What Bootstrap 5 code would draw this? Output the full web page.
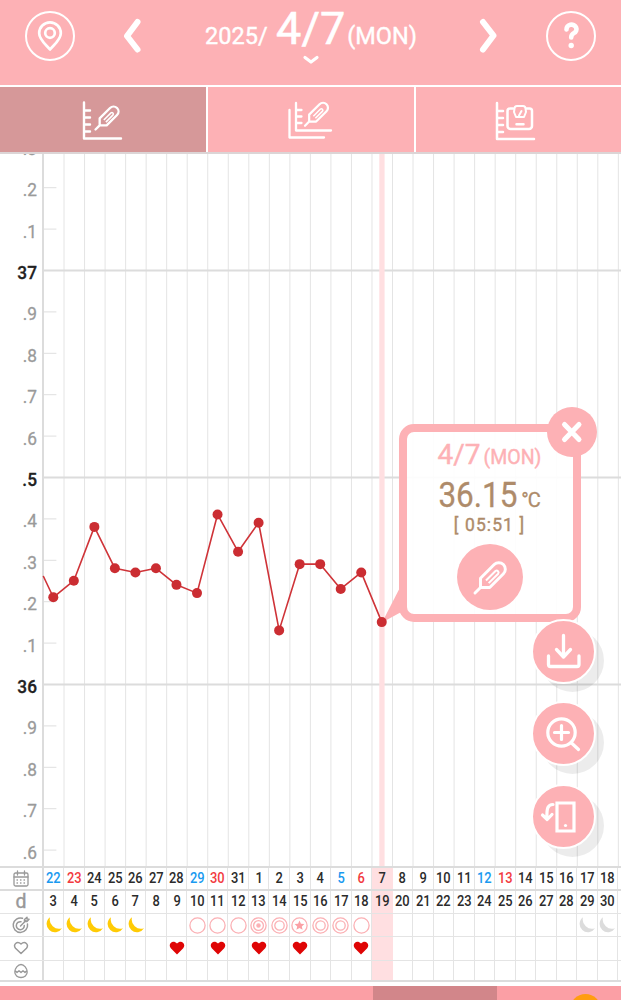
<!DOCTYPE html>
<html lang="ja">
<head>
<meta charset="utf-8">
<meta name="viewport" content="width=device-width, initial-scale=1">
<title>2025/4/7</title>
<link href="https://cdn.jsdelivr.net/npm/bootstrap@5.3.0/dist/css/bootstrap.min.css" rel="stylesheet">
<style>
:root{--pink:#fdb1b5;--grid:#dfdfdf;--colw:20.53px}
body{font-family:Roboto,"Liberation Sans",sans-serif;background:#fff;height:1000px;overflow:hidden;line-height:1}
svg{display:block;fill:none;stroke-linecap:round;stroke-linejoin:round}
.topbar{height:85px;background:var(--pink);padding-left:24.5px}
.topbar>*{flex:none}
.day-title{width:212px;height:64px;margin-left:62px;font-weight:400;font-size:23.5px;white-space:nowrap;-webkit-text-stroke:.4px #fff}
.day-title .big{font-size:45px;margin:0 2px 0 8.5px;-webkit-text-stroke:.6px #fff}
.day-title .words{height:50px;line-height:50px;padding-top:4px;align-items:baseline}
.tabs3{height:68.5px;border-top:2px solid #fff;border-bottom:2px solid #dcd5d6}
.tabs3 a{background:var(--pink);width:206px;flex:none}
.tabs3 a+a{border-left:2px solid #fff;width:208px}
.tabs3 a.active{background:#d69899}
.plot{height:712.5px}
.plot text{font-size:19px;text-anchor:end;fill:#9a9a9a;stroke:#9a9a9a;stroke-width:.3px}
.plot text.major{fill:#222;stroke:#222;font-weight:500}
.bubble{left:398.5px;top:270px;width:182px;height:198px;border:8px solid var(--pink);border-radius:15px;background:rgba(255,255,255,.9);color:var(--pink)}
.bubble>*{flex:none}
.bubble .d1{font-size:28px;line-height:32px;height:34px;margin-top:7px;font-weight:400;-webkit-text-stroke:.4px var(--pink)}
.bubble .d1 small{font-size:19.5px;margin-left:3px}
.bubble .temp{color:#ae8b6a;font-size:35px;line-height:40px;height:40px;margin-top:3px;-webkit-text-stroke:.3px #ae8b6a}
.bubble .temp b{font-weight:400;display:inline-block;transform:scaleX(.9);margin:0 -5px}
.bubble .temp small{font-size:20px;margin-left:4px;letter-spacing:-1px}
.bubble .hour{color:#ae8b6a;font-size:17.5px;line-height:18px;letter-spacing:1.1px;font-weight:400;-webkit-text-stroke:.4px #ae8b6a}
.disc{border-radius:50%;background:var(--pink)}
.shut{width:50px;height:50px;left:547.3px;top:253px}
.fab{width:65px;height:65px;border:2px solid #fff;left:530.5px;box-shadow:9px 9px 0 -1px rgba(0,0,0,.075)}
.sheet{border-top:2px solid #dcdcdc;border-bottom:2px solid #dcdcdc;height:116px;overflow:hidden}
.line-row{display:grid;grid-template-columns:43.8px repeat(29,var(--colw));height:23.2px;border-bottom:1px solid #e4e4e4}
.line-row:first-child{height:23px;border-bottom:2px solid #dcdcdc}
.line-row:last-child{border-bottom:0}
.line-row>div{display:flex;align-items:center;justify-content:center;border-right:1px solid #e4e4e4;font-weight:500;font-size:14.5px;color:#2b2b2b}
.line-row>div:first-child{border-right:2px solid #dcdcdc;color:#999}
.line-row>.today{background:#ffdfe1;border-color:#ffdfe1}
.line-row>.sat{color:#1a9af0}.line-row>.sun{color:#f23b3f}
.line-row u{text-decoration:none;transform:scaleX(.89)}
.line-row:first-child u{padding-top:2px}
.navstrip{height:14px;margin-top:4px;background:#fb9fa5;overflow:hidden}
.navstrip i{width:124.5px;height:14px;margin-left:372.5px;background:#d2868a}
.navstrip b{width:31px;height:31px;border-radius:50%;background:#ff9d10;margin:8px 0 0 72.5px;flex:none}
</style>
<script src="https://cdn.jsdelivr.net/npm/bootstrap@5.3.0/dist/js/bootstrap.bundle.min.js"></script>
</head>
<body>
<svg width="0" height="0" class="position-absolute">
  <defs>
    <g id="thermo"><path d="M0 25 4.300 20.700H11.500L22.200 10a5 5 0 0 0-7.200-7.200L4.300 13.500V20.700"/><path d="M8.600 15.200 16 7.800a1.500 1.500 0 0 1 2.100 2.100L10.700 17.300" stroke-width="1.600" stroke-linecap="butt"/></g>
    <g id="ruler"><path d="M0 0V36H37M0 8H6M0 15H6M0 22H6M0 29H6"/></g>
  </defs>
</svg>
<header class="topbar d-flex">
  <svg width="50" height="50" style="margin-top:11px" stroke="#fff"><circle cx="25" cy="25" r="24" stroke-width="2"/><path d="M25 38.500c-3-4-10.800-9.500-10.800-16.300a10.800 10.800 0 0 1 21.600 0C35.800 29 28 34.500 25 38.500z" stroke-width="2.700"/><circle cx="25" cy="22" r="4.800" stroke-width="2.700"/></svg>
  <svg width="20" height="36" style="margin:18px 0 0 48.500px" stroke="#fff" stroke-width="6"><path d="M14.500 4 4 18 14.500 31.500"/></svg>
  <div class="day-title text-white d-flex flex-column align-items-center">
    <div class="words d-flex"><span>2025/</span><span class="big">4/7</span><span>(MON)</span></div>
    <svg width="18" height="10" style="margin-top:5px" stroke="#fff" stroke-width="3.200"><path d="M3 2.500 9 7 15 2.500"/></svg>
  </div>
  <svg width="20" height="36" style="margin:18px 0 0 61px" stroke="#fff" stroke-width="6"><path d="M5 4 15.500 17.500 5 31.500"/></svg>
  <svg width="50" height="50" style="margin:11px 0 0 48px" stroke="#fff"><circle cx="25" cy="25" r="24" stroke-width="2"/><path d="M20.500 18.500a5 4.500 0 1 1 7.500 3.500c-2 1-2.800 1.800-2.800 4.500" stroke-width="4.600"/><circle cx="25.200" cy="34.500" r="2.700" fill="#fff" stroke="none"/></svg>
</header>
<nav class="tabs3 d-flex">
  <a class="active"><svg width="206" height="64" stroke="#fff" stroke-width="2.400"><use href="#ruler" x="84" y="15.500"/><use href="#thermo" transform="translate(95.500 18.300) scale(.97)"/></svg></a>
  <a><svg width="206" height="64" stroke="#fff" stroke-width="2.300"><path d="M81.500 23V50.500H116"/><path d="M88 16V43.500H123M88 23H93.500M88 29.500H93.500M88 36H93.500"/><use href="#thermo" transform="translate(97 14.500) scale(.97)"/></svg></a>
  <a><svg width="205" height="64" stroke="#fff" stroke-width="2.500"><use href="#ruler" x="81" y="16"/><path d="M97 21.500H94a2.500 2.500 0 0 0-2.500 2.500V39a3 3 0 0 0 3 3H113a3 3 0 0 0 3-3V24a2.500 2.500 0 0 0-2.500-2.500H110.500M100.500 37.300H107.500"/><path d="M98.500 21.500q0-2.500 2.500-2.500h6q2.500 0 2.500 2.500l.5 3.500-2 5H100l-2-5zM103 28.500 105.500 24" stroke-width="2"/></svg></a>
</nav>
<main class="position-relative">
  <svg class="plot" id="plot" width="621" height="713" viewBox="0 153.500 621 712.500" preserveAspectRatio="none"></svg>
  <section class="bubble position-absolute d-flex flex-column align-items-center">
    <div class="d1">4/7<small>(MON)</small></div>
    <div class="temp"><b>36.15</b><small>°C</small></div>
    <div class="hour">[ 05:51 ]</div>
    <svg width="66" height="66" style="margin-top:10.500px" stroke="#fff"><circle cx="33" cy="33" r="33" fill="#fdb1b5" stroke="none"/><use href="#thermo" transform="translate(18 17) scale(1.280)" stroke-width="2.300"/></svg>
  </section>
  <button class="disc shut position-absolute border-0 p-0"><svg width="50" height="50" stroke="#fff" stroke-width="5"><path d="M17.500 17.500 32 32.500M32 17.500 17.500 32.500"/></svg></button>
  <button class="disc fab position-absolute p-0" style="top:465px"><svg width="61" height="61" stroke="#fff" stroke-width="3.300"><path d="M30.500 14.500V35.500M23.500 28.500 30.500 36 37.500 28.500M15.500 35V43.500q0 2 2 2H44q2 0 2-2V35"/></svg></button>
  <button class="disc fab position-absolute p-0" style="top:547.500px"><svg width="61" height="61" stroke="#fff" stroke-width="3.200"><circle cx="28.500" cy="29.500" r="13.700"/><path d="M28.500 22.500V36.500M21.500 29.500H35.500M38.500 40 45.500 46.500"/></svg></button>
  <button class="disc fab position-absolute p-0" style="top:630.500px"><svg width="61" height="61" stroke="#fff" stroke-width="3.200"><path d="M24 17H41V45H24z" stroke-linejoin="miter"/><path d="M20 18.500C15 18.500 13.500 22 14 32M9.500 29 14.200 33.500 19 28.500"/><circle cx="32.500" cy="39.500" r="1.600" fill="#fff" stroke="none"/></svg></button>
</main>
<section class="sheet" id="sheet"></section>
<footer class="navstrip d-flex"><i></i><b></b></footer>
<script>
const STEP = 20.53, X0 = 43.5;
const ty = t => 684 - (t - 36) * 414;
const temps = [.21,.25,.38,.28,.27,.28,.24,.22,.41,.32,.39,.13,.29,.29,.23,.27,.15];
let g = '';
for (let i = 1; i < 29; i++) g += `<path d="M${X0 + i*STEP} 153V866" stroke="#e4e4e4"/>`;
for (let k = 356; k <= 373; k++) {
  const y = ty(k / 10), major = k % 5 === 0;
  g += major ? `<path d="M43 ${y}H621" stroke="#dcdcdc" stroke-width="2"/>` : `<path d="M43 ${y}H56" stroke="#dfdfdf"/>`;
  g += `<text class="${major ? 'major' : ''}" transform="translate(37 ${y + 8.5}) scale(.91 1)">${k % 10 === 0 ? k / 10 : '.' + k % 10}</text>`;
}
g += '<rect x="379.300" y="153" width="5.300" height="713" fill="#ffdfe1"/><path d="M43 153V866" stroke="#dcdcdc" stroke-width="2"/>';
g += '<path d="M382 622 399.500 588 404 610z" fill="#fdb1b5"/>';
const pts = temps.map((t, i) => [53.3 + i*STEP, ty(36 + t) - .3]);
g += `<polyline points="43.500,576 ${pts.join(' ')}" stroke="#cf3338" stroke-width="1.600"/>`;
pts.forEach(p => g += `<circle cx="${p[0]}" cy="${p[1]}" r="5" fill="#cb2d32"/>`);
document.getElementById('plot').innerHTML = g;

const moon = c => `<svg width="18" height="17"><path d="M5 .3A8.300 8.300 0 1 0 17 11.300 9.300 9.300 0 0 1 5 .3z" fill="${c}"/></svg>`;
const ring = inner => `<svg width="17" height="17" stroke="#fbb0b4" stroke-width="1.300"><circle cx="8.500" cy="8.500" r="7.600"/>${inner}</svg>`;
const dbl = ring('<circle cx="8.500" cy="8.500" r="4.700"/>');
const tri = ring('<circle cx="8.500" cy="8.500" r="4.900"/><circle cx="8.500" cy="8.500" r="1.600" fill="#fbb0b4"/>');
const star = ring('<path d="M8.500 3.600 9.900 6.800 13.400 7.100 10.800 9.400 11.600 12.800 8.500 11 5.400 12.800 6.200 9.400 3.600 7.100 7.100 6.800z" fill="#fba0a5" stroke="none"/>');
const heart = '<svg width="16" height="14"><path d="M8 13.500 1.800 7.300C-1.500 3.500 3.500-2 8 2.500 12.500-2 17.500 3.500 14.200 7.300z" fill="#df0505"/></svg>';
const gold = '#ffcb05', pale = '#dcdcdc';
const marks = {0:moon(gold),1:moon(gold),2:moon(gold),3:moon(gold),4:moon(gold),7:ring(''),8:ring(''),9:ring(''),10:tri,11:dbl,12:star,13:dbl,14:dbl,15:ring(''),26:moon(pale),27:moon(pale)};
const icons = [
 '<svg width="18" height="18" stroke="#999" stroke-width="1.300"><rect x="2" y="3" width="14" height="13" rx="1.500"/><path d="M2 7H16M5.500 1V5M12.500 1V5"/><path d="M5 10H13M5 13H13" stroke-dasharray=".5 3"/></svg>',
 '<span style="font-size:19.500px;font-weight:400;line-height:16px;-webkit-text-stroke:.4px #999">d</span>',
 '<svg width="18" height="18" stroke="#999" stroke-width="1.500"><path d="M10.500 2.300A7.200 7.200 0 1 0 15.500 8M9 5.700A4 4 0 1 0 12.300 9.500M8.500 10 14 4.500M12.500 5.500V3.500L15 1.200V3L17 3.300 15 5.500z"/></svg>',
 '<svg width="16" height="14" stroke="#999" stroke-width="1.500"><path d="M8 12.500 2.500 7.200C-.5 3.700 4-.5 8 3 12-.5 16.500 3.700 13.500 7.200z"/></svg>',
 '<svg width="16" height="16" stroke="#999" stroke-width="1.300" style="margin-top:-2px"><path d="M8 1.500C5 1.500 1.800 5.500 1.800 9a6.200 5.500 0 0 0 12.400 0C14.200 5.500 11 1.500 8 1.500zM2 7.500l2 2 2-1.800 2 1.800 2-1.800 2 1.800 2-2"/></svg>'
];
const num = n => `<u>${n}</u>`;
const cell = [i => num(i < 10 ? 22 + i : i - 9), i => num(i + 3), i => marks[i] || '', i => [6,8,10,12,15].includes(i) ? heart : '', () => ''];
let s = '';
for (let r = 0; r < 5; r++) {
  s += `<div class="line-row"><div>${icons[r]}</div>`;
  for (let i = 0; i < 28; i++) {
    const c = i === 16 ? 'today' : r === 0 && i % 7 === 0 && i < 22 ? 'sat' : r === 0 && i % 7 === 1 && i < 23 ? 'sun' : '';
    s += `<div class="${c}">${cell[r](i)}</div>`;
  }
  s += '<div></div></div>';
}
document.getElementById('sheet').innerHTML = s;
</script>
</body>
</html>
